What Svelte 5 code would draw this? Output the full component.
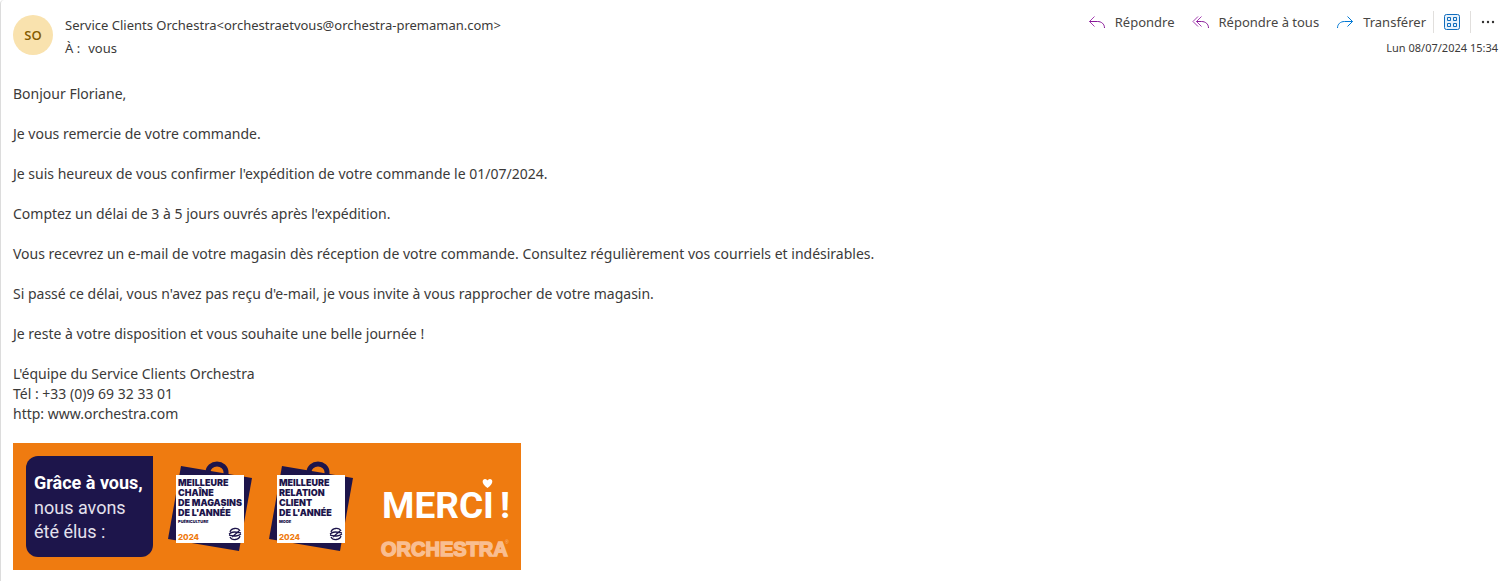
<script>
  const paragraphs = [
    'Bonjour Floriane,',
    'Je vous remercie de votre commande.',
    "Je suis heureux de vous confirmer l'expédition de votre commande le 01/07/2024.",
    "Comptez un délai de 3 à 5 jours ouvrés après l'expédition.",
    'Vous recevrez un e-mail de votre magasin dès réception de votre commande. Consultez régulièrement vos courriels et indésirables.',
    "Si passé ce délai, vous n'avez pas reçu d'e-mail, je vous invite à vous rapprocher de votre magasin.",
    'Je reste à votre disposition et vous souhaite une belle journée !'
  ];

  const badges = [
    { x: 0, lines: ['MEILLEURE', 'CHAÎNE', 'DE MAGASINS', "DE L'ANNÉE"], sector: 'PUÉRICULTURE' },
    { x: 101, lines: ['MEILLEURE', 'RELATION', 'CLIENT', "DE L'ANNÉE"], sector: 'MODE' }
  ];
</script>

<article class="message">
  <header>
    <div class="avatar" aria-hidden="true">SO</div>
    <div class="people">
      <div class="from">Service Clients Orchestra&lt;orchestraetvous@orchestra-premaman.com&gt;</div>
      <div class="to"><span>À :</span><span>vous</span></div>
    </div>
    <div class="side">
      <div class="actions">
        <button class="action reply">
          <svg class="purple" width="18" height="14" viewBox="0 0 18 14"><path class="head" d="M6.500 1.500 1.500 6.500l5 5" /><path d="M1.500 6.500h8c4 0 7 2.500 7 6.500" /></svg>
          <span>Répondre</span>
        </button>
        <button class="action all">
          <svg class="purple" width="18" height="14" viewBox="0 0 18 14"><path class="head" d="M6 1.500l-5 5 5 5M9.500 1.500l-5 5 5 5" /><path d="M4.500 6.500h5c4 0 7 2.500 7 6.500" /></svg>
          <span>Répondre à tous</span>
        </button>
        <button class="action forward">
          <svg class="blue" width="18" height="14" viewBox="0 0 18 14"><path d="M11.500 1.500l5 5-5 5M16.500 6.500h-8c-4 0-7 2.500-7 6.500" /></svg>
          <span>Transférer</span>
        </button>
        <button class="tool apps" aria-label="Applications">
          <svg width="16" height="16" viewBox="0 0 16 16"><rect x=".5" y=".5" width="15" height="15" rx="2" fill="#e8f2fb" /><path d="M3.500 3.500h3v3h-3zM9.500 3.500h3v3h-3zM3.500 9.500h3v3h-3zM9.500 9.500h3v3h-3z" /></svg>
        </button>
        <button class="tool more" aria-label="Autres actions">
          <svg width="14" height="4" viewBox="0 0 14 4"><circle cx="2" cy="2" r="1.200" /><circle cx="7" cy="2" r="1.200" /><circle cx="12" cy="2" r="1.200" /></svg>
        </button>
      </div>
      <time datetime="2024-07-08T15:34">Lun 08/07/2024 15:34</time>
    </div>
  </header>

  <div class="body">
    {#each paragraphs as text}
      <p>{text}</p>
    {/each}
    <p class="signature">L'équipe du Service Clients Orchestra<br />Tél : +33 (0)9 69 32 33 01<br />http: www.orchestra.com</p>

    <svg class="banner" width="508" height="127" viewBox="0 0 508 127">
      <rect width="508" height="127" fill="#ef7b10" />
      <path d="M25 13h115v89a12 12 0 0 1-12 12H25a12 12 0 0 1-12-12V25a12 12 0 0 1 12-12z" fill="#1d154b" />
      <g class="thanks">
        <text class="strong" x="21" y="46">Grâce à vous,</text>
        <text x="21" y="71">nous avons</text>
        <text x="21" y="95">été élus :</text>
      </g>
      {#each badges as badge}
        <g class="badge" transform="translate({badge.x} 0)">
          <path d="M168 23 239 35 226 108 155 96z" fill="#1d154b" />
          <path d="M195 32v-3a9 8 0 0 1 18 0v3" fill="none" stroke="#1d154b" stroke-width="5" />
          <rect x="163" y="32" width="68" height="68" fill="#fff" />
          {#each badge.lines as line, i}
            <text class="title" x="165" y={43 + i * 10}>{line}</text>
          {/each}
          <text class="sector" x="165" y="80">{badge.sector}</text>
          <text class="year" x="165" y="97">2024</text>
          <path d="M217 89c1-4 8-5 10-1M227 93c-1 4-8 5-10 1M216 91c4-3 7-2 12-1M228 91c-4 3-7 2-12 1M219 94l7-6" fill="none" stroke="#1d154b" stroke-width="1.300" />
        </g>
      {/each}
      <text class="merci" x="369" y="75">MERCI</text>
      <text class="merci" x="487" y="75">!</text>
      <path d="M474.500 45c-7-5-5-9-2.500-9 1.500 0 2.500 1.500 2.500 1.500s1-1.500 2.500-1.500c2.500 0 4.500 4-2.500 9z" fill="#fff" />
      <text class="brand" x="368" y="113">ORCHESTRA</text>
      <text class="mark" x="492" y="101">®</text>
    </svg>
  </div>
</article>

<style>
  :global(body) {
    background: #fff;
  }
  .message {
    box-sizing: border-box;
    min-height: 100vh;
    padding: 15px 13px 11px 12px;
    border-left: 1px solid #dcdcdc;
    border-top-left-radius: 4px;
    color: #3b3a39;
    font: 14px/20px 'Noto Sans', 'Open Sans', sans-serif;
  }
  header {
    display: flex;
    align-items: flex-start;
    font-size: 13px;
  }
  .avatar {
    width: 40px;
    height: 40px;
    margin-right: 12px;
    border-radius: 50%;
    background: #f9e2ae;
    color: #835b00;
    font-family: 'Open Sans', sans-serif;
    font-weight: 600;
    line-height: 40px;
    text-align: center;
  }
  .people {
    flex: 1;
  }
  .to {
    display: flex;
    gap: 8px;
    margin-top: 3px;
  }
  .side {
    display: flex;
    flex-direction: column;
    align-items: flex-end;
    margin-top: -4px;
  }
  .actions {
    display: flex;
    align-items: center;
    padding-right: 3px;
  }
  button {
    display: flex;
    align-items: center;
    padding: 0;
    border: 0;
    background: none;
    color: #484644;
    font: inherit;
    line-height: 22px;
  }
  .action {
    gap: 9px;
    margin-right: 17px;
  }
  .forward {
    margin-right: 7px;
  }
  .tool {
    height: 22px;
    border-left: 1px solid #e1dfdd;
    padding-left: 10px;
  }
  .apps {
    padding-right: 10px;
  }
  button svg {
    fill: none;
    stroke-width: 1;
  }
  .purple {
    stroke: #881798;
  }
  .blue {
    stroke: #0078d4;
  }
  .head {
    stroke: #a43fb1;
  }
  .apps svg {
    stroke: #0f6cbd;
  }
  .more svg {
    fill: #323130;
  }
  time {
    margin-top: 5px;
    font-size: 11px;
    line-height: 20px;
  }
  .body {
    padding-top: 26px;
  }
  p {
    margin: 0 0 20px;
  }
  .signature {
    margin-bottom: 19px;
  }
  .banner {
    display: block;
    max-width: 100%;
  }
  .thanks {
    fill: #e4e1ee;
    font: 18px Roboto, sans-serif;
  }
  .strong {
    fill: #fff;
    font-weight: 700;
  }
  .title {
    fill: #1d154b;
    font: 900 9px Inter, sans-serif;
  }
  .sector {
    fill: #1d154b;
    font: 900 4px Inter, sans-serif;
  }
  .year {
    fill: #ef7b10;
    font: 800 8px Inter, sans-serif;
  }
  .merci {
    fill: #fff;
    font: 700 37px Roboto, sans-serif;
  }
  .brand {
    fill: #f9be91;
    stroke: #f9be91;
    stroke-width: 1.500;
    font: 700 20px 'Liberation Sans', sans-serif;
  }
  .mark {
    fill: #f9be91;
    font: 5px 'Liberation Sans', sans-serif;
  }
</style>
